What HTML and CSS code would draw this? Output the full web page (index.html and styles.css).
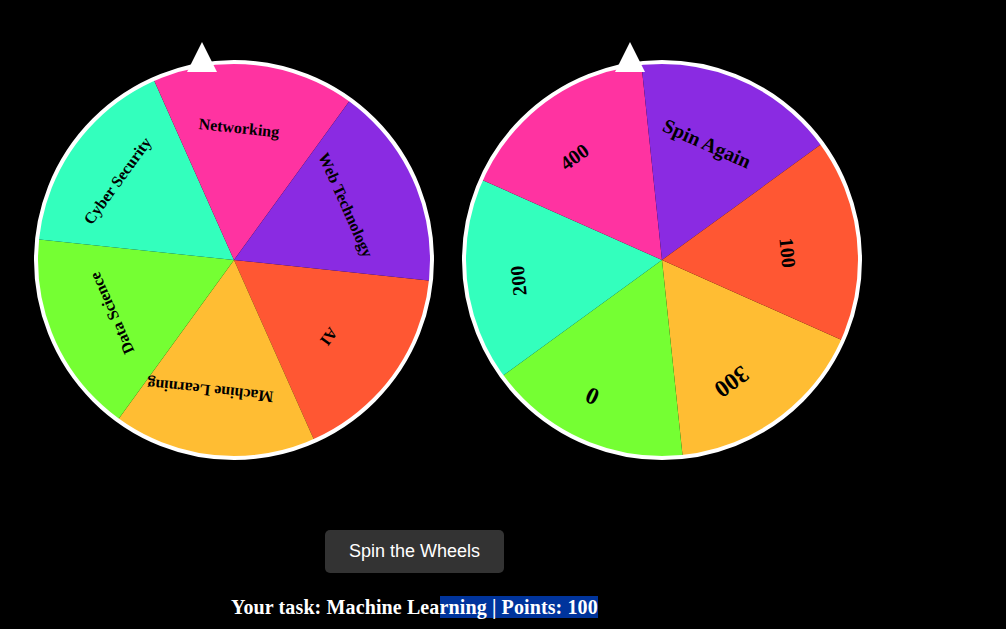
FILE: index.html
```html
<!DOCTYPE html>
<html lang="en">
<head>
<meta charset="utf-8">
<title>Spin the Wheels</title>
<link rel="stylesheet" href="styles.css">
</head>
<body>
<div class="app">
  <div class="wheels">
    <div class="wheel-wrap">
      <div class="pointer"></div>
      <svg class="wheel" width="400" height="400" viewBox="0 0 400 400">
        <path fill="#FF5733" d="M200 200 L396.92 220.70 A198 198 0 0 1 280.53 380.88 Z"/>
        <path fill="#FFBD33" d="M200 200 L280.53 380.88 A198 198 0 0 1 83.62 360.19 Z"/>
        <path fill="#75FF33" d="M200 200 L83.62 360.19 A198 198 0 0 1 3.08 179.30 Z"/>
        <path fill="#33FFBD" d="M200 200 L3.08 179.30 A198 198 0 0 1 119.47 19.12 Z"/>
        <path fill="#FF33A1" d="M200 200 L119.47 19.12 A198 198 0 0 1 316.38 39.81 Z"/>
        <path fill="#8A2BE2" d="M200 200 L316.38 39.81 A198 198 0 0 1 396.92 220.70 Z"/>
        <circle cx="200" cy="200" r="198" fill="none" stroke="#fff" stroke-width="4"/>
        <g class="label-sm">
          <text transform="translate(205 67.7) rotate(6)">Networking</text>
          <text transform="translate(312 145) rotate(66)">Web Technology</text>
          <text transform="translate(295 276.7) rotate(126)">AI</text>
          <text transform="translate(176.3 330.7) rotate(186)">Machine Learning</text>
          <text transform="translate(77.7 253.3) rotate(246)">Data Science</text>
          <text transform="translate(83.3 120.7) rotate(306)">Cyber Security</text>
        </g>
      </svg>
    </div>
    <div class="wheel-wrap">
      <div class="pointer"></div>
      <svg class="wheel" width="400" height="400" viewBox="0 0 400 400">
        <path fill="#FFBD33" d="M200 200 L380.88 280.53 A198 198 0 0 1 220.70 396.92 Z"/>
        <path fill="#75FF33" d="M200 200 L220.70 396.92 A198 198 0 0 1 39.81 316.38 Z"/>
        <path fill="#33FFBD" d="M200 200 L39.81 316.38 A198 198 0 0 1 19.12 119.47 Z"/>
        <path fill="#FF33A1" d="M200 200 L19.12 119.47 A198 198 0 0 1 179.30 3.08 Z"/>
        <path fill="#8A2BE2" d="M200 200 L179.30 3.08 A198 198 0 0 1 360.19 83.62 Z"/>
        <path fill="#FF5733" d="M200 200 L360.19 83.62 A198 198 0 0 1 380.88 280.53 Z"/>
        <circle cx="200" cy="200" r="198" fill="none" stroke="#fff" stroke-width="4"/>
        <g class="label-lg">
          <text transform="translate(245 83.3) rotate(24)">Spin Again</text>
          <text transform="translate(112.3 96.7) rotate(324)">400</text>
          <text transform="translate(56.3 220.7) rotate(264)">200</text>
          <text class="xl" transform="translate(130.3 336) rotate(204)">0</text>
          <text class="xl" transform="translate(269.7 321.7) rotate(144)">300</text>
          <text transform="translate(325.7 192.7) rotate(84)">100</text>
        </g>
      </svg>
    </div>
  </div>
  <div class="controls">
    <button class="spin-btn" type="button">Spin the Wheels</button>
    <p class="result">Your task: Machine Lea<span class="selected">rning | Points: 100</span></p>
  </div>
</div>
</body>
</html>
```

FILE: styles.css
```css
html, body {
  margin: 0;
  padding: 0;
  background: #000;
}

.app {
  padding-top: 60px;
}

.wheels {
  display: flex;
  gap: 28px;
  padding-left: 34px;
}

.wheel-wrap {
  position: relative;
  width: 400px;
  height: 400px;
}

.wheel {
  display: block;
}

.pointer {
  position: absolute;
  left: 153px;
  top: -18px;
  width: 0;
  height: 0;
  border-left: 15px solid transparent;
  border-right: 15px solid transparent;
  border-bottom: 30px solid #fff;
  z-index: 2;
}

.wheel text {
  font-family: "Liberation Serif", "Times New Roman", serif;
  font-weight: bold;
  fill: #000;
  text-anchor: middle;
  dominant-baseline: central;
}

.label-sm text {
  font-size: 16px;
}

.label-lg text {
  font-size: 20px;
}

.label-lg text.xl {
  font-size: 24px;
}

.controls {
  width: 829px;
  display: flex;
  flex-direction: column;
  align-items: center;
}

.spin-btn {
  margin-top: 70px;
  padding: 11px 24px;
  border: none;
  border-radius: 5px;
  background: #333;
  color: #fff;
  font-family: "Liberation Sans", Arial, sans-serif;
  font-size: 18px;
  line-height: 21px;
  cursor: pointer;
}

.result {
  margin: 23px 0 0;
  color: #fff;
  font-family: "Liberation Serif", "Times New Roman", serif;
  font-weight: bold;
  font-size: 20px;
  line-height: 23px;
  letter-spacing: 0.12px;
}

.selected {
  background: #00349c;
}
```
